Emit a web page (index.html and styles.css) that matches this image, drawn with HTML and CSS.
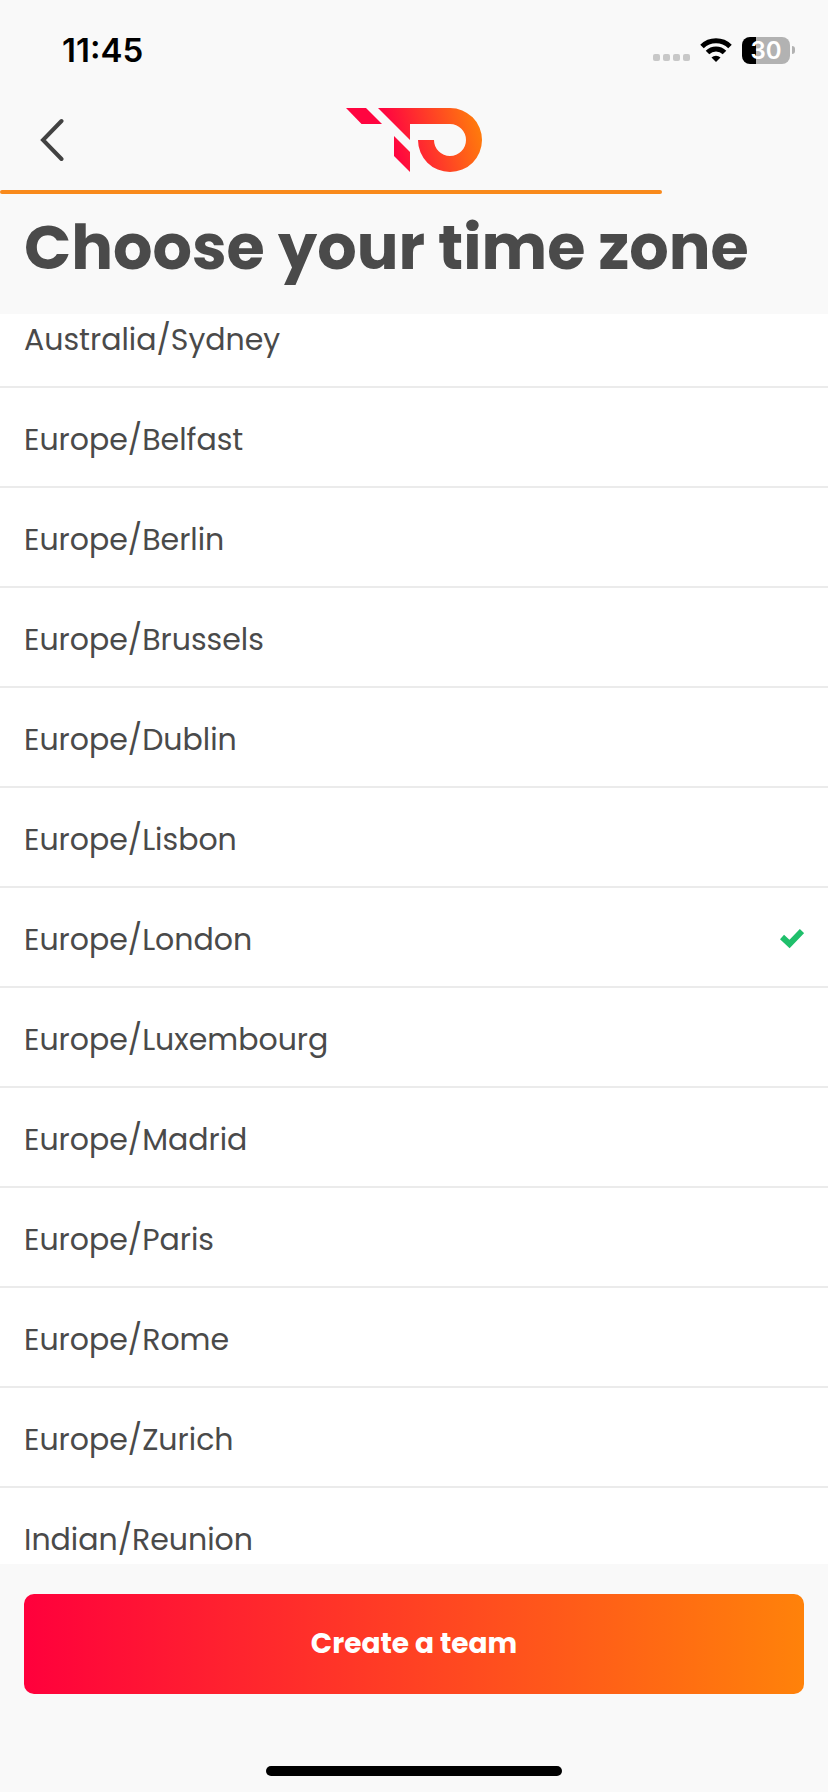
FILE: index.html
```html
<!DOCTYPE html>
<html lang="en">
<head>
    <meta charset="UTF-8">
    <meta name="viewport" content="width=device-width, initial-scale=1.0">
    <title>Choose your time zone</title>
    <link rel="stylesheet" href="styles.css">
</head>
<body>
    <div class="status-bar">
        <span class="time">11:45</span>
        <div class="status-icons">
            <div class="signal"><i></i><i></i><i></i><i></i></div>
            <svg class="wifi" width="32" height="26" viewBox="0 0 32 26" fill="none" stroke="#000" stroke-width="5">
                <path d="M2 9.500A20 20 0 0 1 30 9.500"/>
                <path d="M7.500 15.500A12 12 0 0 1 24.500 15.500"/>
                <path d="M16 25L11.500 20.500A6.500 6.500 0 0 1 20.500 20.500Z" fill="#000" stroke="none"/>
            </svg>
            <div class="battery">
                <span class="battery-level">30</span>
                <span class="battery-tip"></span>
            </div>
        </div>
    </div>

    <header class="nav">
        <button class="back" aria-label="Back">
            <svg width="24" height="44" viewBox="0 0 24 44" fill="none" stroke="#424242" stroke-width="4" stroke-linecap="round">
                <path d="M21.500 3L3 22L21.500 41"/>
            </svg>
        </button>
        <svg class="logo" width="136" height="64" viewBox="0 0 136 64">
            <defs>
                <linearGradient id="brand" gradientUnits="userSpaceOnUse" x1="48" y1="40" x2="132" y2="16">
                    <stop offset="0" stop-color="#ff0540"/>
                    <stop offset="1" stop-color="#ff7a0c"/>
                </linearGradient>
            </defs>
            <g fill="url(#brand)">
                <path d="M0 0H20L36 16H15.500Z"/>
                <path d="M32 0H104A32 32 0 1 1 72 32H88A16 16 0 1 0 104 16H64V32Z"/>
                <path d="M48 28L64 44V64L48 48Z"/>
            </g>
        </svg>
    </header>
    <div class="progress"><div class="progress-value" style="width: 80%"></div></div>

    <h1>Choose your time zone</h1>

    <main class="zones" id="zones"></main>

    <footer>
        <button class="create">Create a team</button>
        <div class="home-indicator"></div>
    </footer>

    <script>
        const zones = [
            'Australia/Sydney',
            'Europe/Belfast',
            'Europe/Berlin',
            'Europe/Brussels',
            'Europe/Dublin',
            'Europe/Lisbon',
            'Europe/London',
            'Europe/Luxembourg',
            'Europe/Madrid',
            'Europe/Paris',
            'Europe/Rome',
            'Europe/Zurich',
            'Indian/Reunion'
        ];
        const list = document.getElementById('zones');

        list.innerHTML = zones.map(zone => `
            <label class="zone">
                <input type="radio" name="zone" value="${zone}" ${zone === 'Europe/London' ? 'checked' : ''}>
                <span>${zone}</span>
                <svg class="check" width="24" height="24" viewBox="0 0 24 24" fill="none" stroke="#1fbf6b" stroke-width="6">
                    <path d="M2 9L9.500 16L22 3"/>
                </svg>
            </label>
        `).join('');

        list.scrollTop = 26;
    </script>
</body>
</html>
```

FILE: styles.css
```css
* {
    box-sizing: border-box;
}
body {
    font-family: Poppins, Inter, sans-serif;
    margin: 0;
    height: 100vh;
    display: flex;
    flex-direction: column;
    background-color: #f9f9f9;
    color: #4a4a4a;
}
button {
    border: none;
    font-family: inherit;
    cursor: pointer;
}
.status-bar {
    flex: none;
    height: 100px;
    padding: 0 33px 0 62px;
    display: flex;
    align-items: center;
    justify-content: space-between;
    color: #000;
    font-family: Inter, sans-serif;
}
.time {
    font-size: 33px;
    font-weight: 600;
}
.status-icons {
    display: flex;
    align-items: center;
    gap: 10px;
}
.signal {
    display: flex;
    gap: 3px;
    padding-top: 14px;
}
.signal i {
    width: 7px;
    height: 7px;
    border-radius: 2px;
    background-color: #c8c8c8;
}
.battery {
    display: flex;
    align-items: center;
    gap: 2px;
}
.battery-level {
    width: 48px;
    height: 27px;
    border-radius: 8px;
    background: linear-gradient(to right, #000 30%, #b2b2b2 30%);
    color: #fff;
    font-size: 24px;
    font-weight: 600;
    line-height: 27px;
    text-align: center;
}
.battery-tip {
    width: 3px;
    height: 8px;
    border-radius: 0 4px 4px 0;
    background-color: #b2b2b2;
}
.nav {
    flex: none;
    height: 90px;
    padding: 0 24px 10px;
    display: grid;
    grid-template-columns: 1fr auto 1fr;
    align-items: center;
}
.back {
    justify-self: start;
    display: flex;
    padding: 8px 16px;
    background: none;
}
.progress {
    flex: none;
    height: 4px;
}
.progress-value {
    height: 100%;
    border-radius: 2px;
    background-color: #f98a1c;
}
h1 {
    flex: none;
    margin: 0;
    height: 120px;
    padding: 0 24px;
    font-size: 62px;
    font-weight: 700;
    line-height: 108px;
    white-space: nowrap;
}
.zones {
    flex: 1;
    min-height: 0;
    overflow-y: auto;
    scrollbar-width: none;
    background-color: #fff;
}
.zone {
    height: 100px;
    padding: 6px 24px 0;
    display: flex;
    align-items: center;
    justify-content: space-between;
    border-bottom: 2px solid #ebebeb;
    font-size: 30px;
    cursor: pointer;
}
.zone input {
    position: absolute;
    opacity: 0;
}
.check {
    visibility: hidden;
}
.zone input:checked ~ .check {
    visibility: visible;
}
footer {
    flex: none;
    padding: 30px 24px 16px;
    display: flex;
    flex-direction: column;
    align-items: center;
    gap: 72px;
}
.create {
    width: 100%;
    height: 100px;
    border-radius: 10px;
    background: linear-gradient(to right, #ff003c, #ff820a);
    color: #fff;
    font-size: 28px;
    font-weight: 700;
}
.home-indicator {
    width: 296px;
    height: 10px;
    border-radius: 5px;
    background-color: #000;
}
```
